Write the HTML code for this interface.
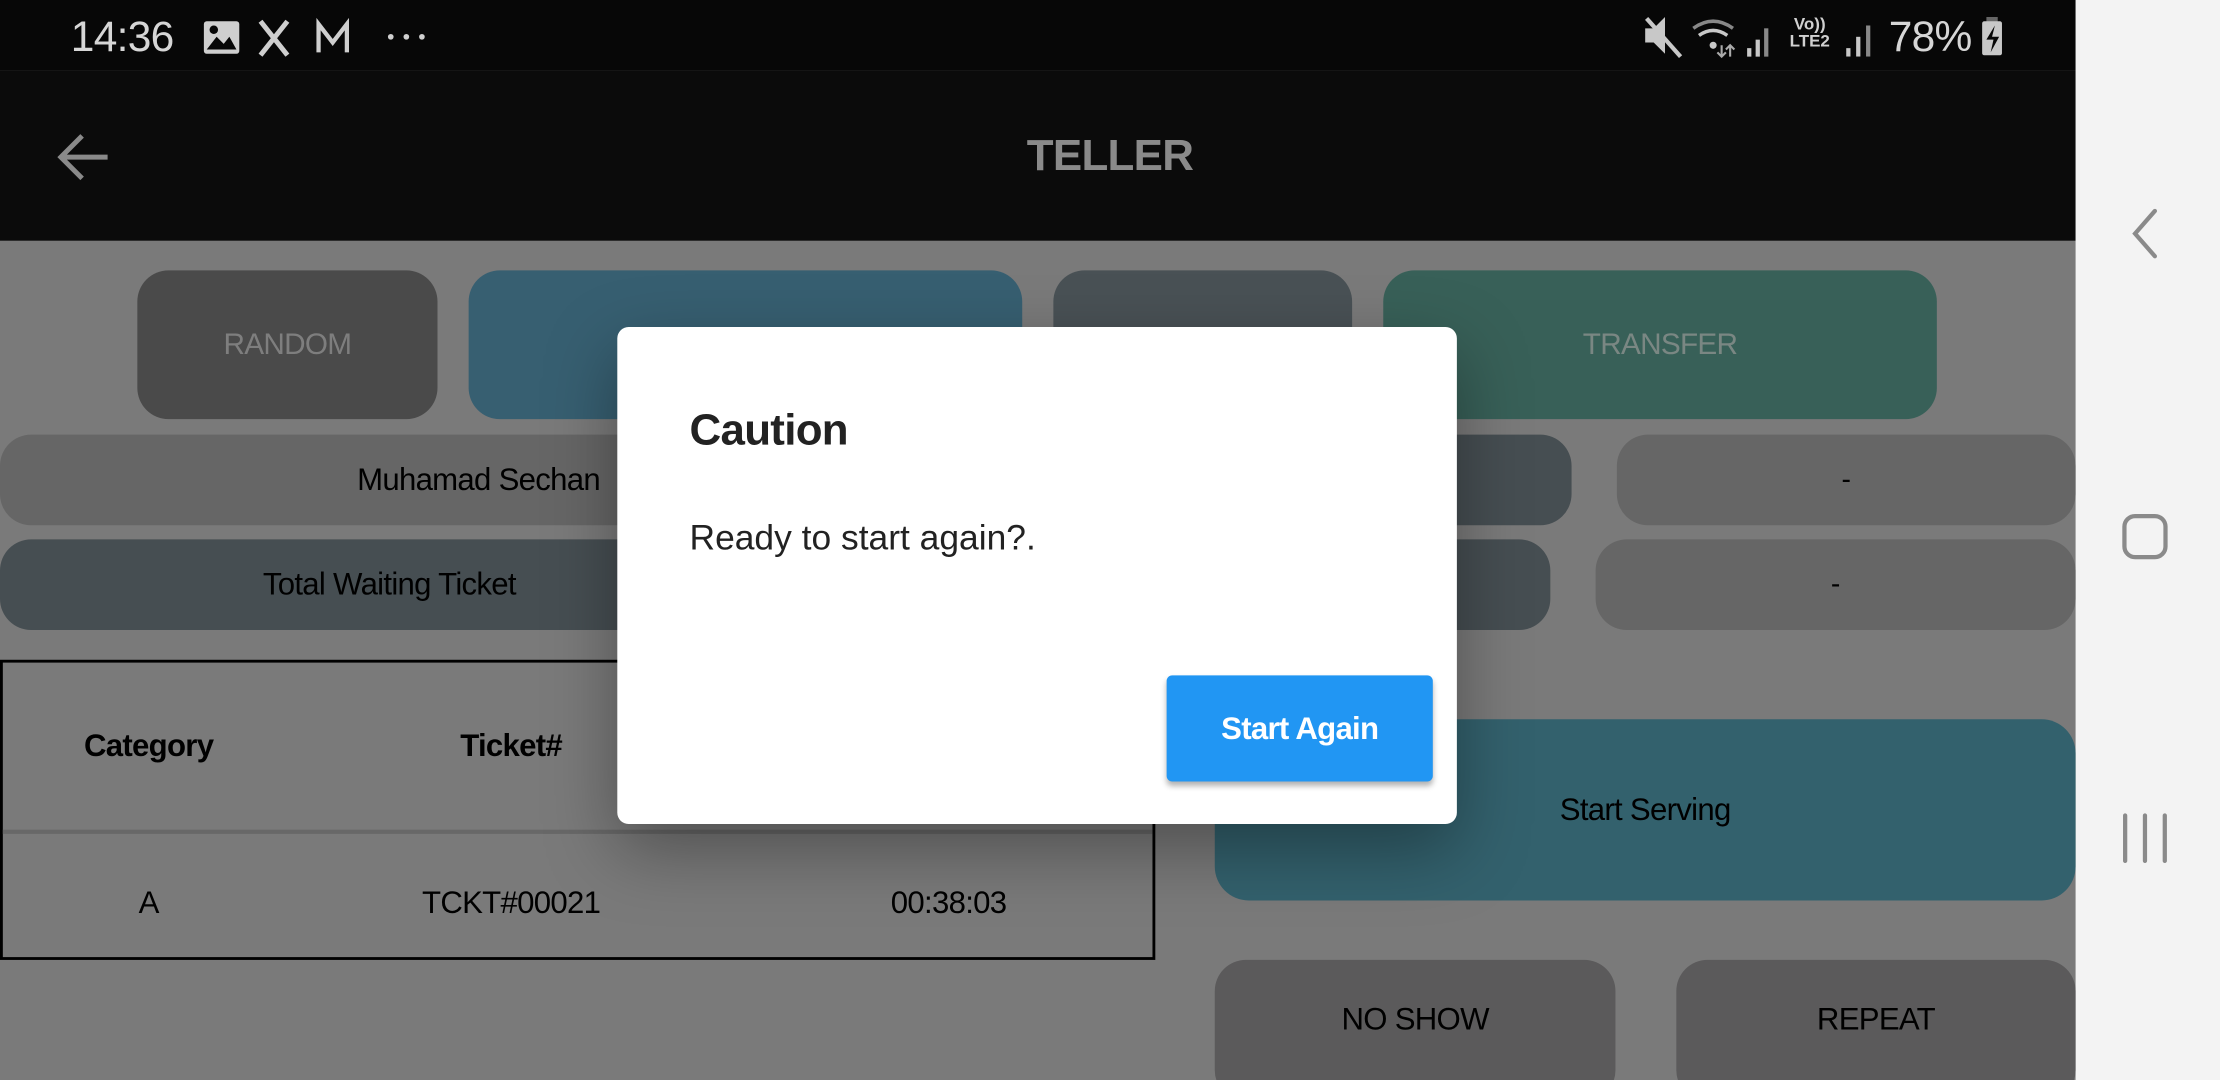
<!DOCTYPE html>
<html><head><meta charset="utf-8"><style>
html,body{margin:0;padding:0;width:2220px;height:1080px;overflow:hidden;background:#7a7a7a}
#s{position:absolute;left:0;top:0;width:1568px;height:763px;transform:scale(1.41582);transform-origin:0 0;font-family:"Liberation Sans",sans-serif;background:#7a7a7a;overflow:hidden}
.a{position:absolute;box-sizing:border-box}
.c{display:flex;align-items:center;justify-content:center}
.t{letter-spacing:-0.5px}
</style></head><body><div id="s">
<div class="a" style="left:0;top:0;width:1466px;height:50px;background:#070707"></div>
<div class="a" style="left:0;top:50px;width:1466px;height:120px;background:#0b0b0b"></div>
<div class="a" style="left:1466px;top:0;width:102px;height:763px;background:#f3f3f3"></div>
<div class="a t" style="left:50px;top:10px;font-size:30px;color:#d6d6d6">14:36</div>
<svg class="a" style="left:143px;top:12px" width="180" height="28" viewBox="0 0 180 28">
<rect x="1" y="3" width="25" height="23" rx="2" fill="#cfcfcf"/><path d="M3 23 L10 14 L15 19 L19 14 L24 23Z" fill="#070707"/><circle cx="8" cy="9" r="3" fill="#070707"/>
<path d="M41 3 L60 27 M60 3 L41 27" stroke="#cfcfcf" stroke-width="3.5"/>
<path d="M82 25 V5 L92 18 L102 5 V25" stroke="#cfcfcf" stroke-width="3" fill="none"/>
<circle cx="133" cy="14" r="2" fill="#cfcfcf"/><circle cx="144" cy="14" r="2" fill="#cfcfcf"/><circle cx="155" cy="14" r="2" fill="#cfcfcf"/>
</svg>
<svg class="a" style="left:1160px;top:10px" width="100" height="32" viewBox="0 0 100 32">
<path d="M2 10h6l8-8v26l-8-8H2z" fill="#c8c8c8"/><path d="M3 3L27 30" stroke="#c8c8c8" stroke-width="3"/>
<path d="M36 10 Q50 0 64 10" stroke="#888" stroke-width="2.5" fill="none"/><path d="M40 15 Q50 8 60 15" stroke="#c8c8c8" stroke-width="2.5" fill="none"/><circle cx="50" cy="22" r="2.5" fill="#c8c8c8"/>
<path d="M56 22v8M53 27l3 3 3-3M62 30v-8M59 25l3-3 3 3" stroke="#aaa" stroke-width="1.5" fill="none"/>
<rect x="74" y="24" width="3" height="6" fill="#c8c8c8"/><rect x="80" y="18" width="3" height="12" fill="#c8c8c8"/><rect x="86" y="10" width="3" height="20" fill="#888"/>
</svg>
<div class="a" style="left:1264px;top:11px;font-size:12px;line-height:12px;color:#d0d0d0;font-weight:bold;text-align:center">Vo))<br>LTE2</div>
<svg class="a" style="left:1302px;top:12px" width="24" height="28"><rect x="2" y="22" width="3" height="6" fill="#c8c8c8"/><rect x="9" y="14" width="3" height="14" fill="#c8c8c8"/><rect x="16" y="6" width="3" height="22" fill="#888"/></svg>
<div class="a t" style="left:1334px;top:10px;font-size:30px;color:#d6d6d6">78%</div>
<svg class="a" style="left:1398px;top:12px" width="22" height="28"><rect x="5" y="0" width="8" height="4" fill="#666"/><rect x="2" y="3" width="14" height="24" rx="1.5" fill="#c8c8c8"/><path d="M11 6L5 16h5l-2 9 6-11H9z" fill="#070707"/></svg>
<svg class="a" style="left:38px;top:90px" width="42" height="42" viewBox="0 0 42 42"><path d="M38 21H6M20 6L5 21l15 15" stroke="#8a8a8a" stroke-width="3.5" fill="none"/></svg>
<div class="a t" style="left:0;top:92px;width:1568px;text-align:center;font-size:31px;font-weight:bold;color:#8a8a8a">TELLER</div>
<div class="a c t" style="left:97px;top:191px;width:212px;height:105px;border-radius:22px;background:#4a4a4a;color:#7e7e7e;font-size:21px">RANDOM</div>
<div class="a" style="left:331px;top:191px;width:391px;height:105px;border-radius:22px;background:#375f71"></div>
<div class="a" style="left:744px;top:191px;width:211px;height:105px;border-radius:22px;background:#495155"></div>
<div class="a c t" style="left:977px;top:191px;width:391px;height:105px;border-radius:22px;background:#386058;color:#7a8783;font-size:21px">TRANSFER</div>
<div class="a c t" style="left:0;top:307px;width:676px;height:64px;border-radius:22px;background:#666;color:#000;font-size:22px">Muhamad Sechan</div>
<div class="a" style="left:700px;top:307px;width:410px;height:64px;border-radius:22px;background:#464e52"></div>
<div class="a c" style="left:1142px;top:307px;width:324px;height:64px;border-radius:22px;background:#666;color:#000;font-size:20px">-</div>
<div class="a c t" style="left:0;top:381px;width:550px;height:64px;border-radius:22px;background:#464e52;color:#000;font-size:22px">Total Waiting Ticket</div>
<div class="a" style="left:570px;top:381px;width:525px;height:64px;border-radius:22px;background:#464e52"></div>
<div class="a c" style="left:1127px;top:381px;width:339px;height:64px;border-radius:22px;background:#666;color:#000;font-size:20px">-</div>
<div class="a" style="left:0;top:466px;width:816px;height:212px;border:2px solid #000"></div>
<div class="a" style="left:2px;top:586px;width:812px;height:3px;background:#686868"></div>
<div class="a t" style="left:105px;top:514px;transform:translateX(-50%);font-size:22px;font-weight:bold;color:#000">Category</div>
<div class="a t" style="left:361px;top:514px;transform:translateX(-50%);font-size:22px;font-weight:bold;color:#000">Ticket#</div>
<div class="a t" style="left:105px;top:625px;transform:translateX(-50%);font-size:22px;color:#000">A</div>
<div class="a t" style="left:361px;top:625px;transform:translateX(-50%);font-size:22px;color:#000">TCKT#00021</div>
<div class="a t" style="left:670px;top:625px;transform:translateX(-50%);font-size:22px;color:#000">00:38:03</div>
<div class="a c t" style="left:858px;top:508px;width:608px;height:128px;border-radius:24px;background:#33616d;color:#000;font-size:22px">Start Serving</div>
<div class="a c t" style="left:858px;top:678px;width:283px;height:100px;border-radius:22px;background:#5b5a5b;color:#000;font-size:22px;align-items:flex-start;padding-top:29px">NO SHOW</div>
<div class="a c t" style="left:1184px;top:678px;width:282px;height:100px;border-radius:22px;background:#5b5a5b;color:#000;font-size:22px;align-items:flex-start;padding-top:29px">REPEAT</div>
<div class="a" style="left:436px;top:231px;width:593px;height:351px;border-radius:8px;background:#fff;box-shadow:0 18px 50px rgba(0,0,0,0.35)">
<div class="a t" style="left:51px;top:55px;font-size:31px;font-weight:bold;color:#222">Caution</div>
<div class="a" style="left:51px;top:135px;font-size:25px;color:#222">Ready to start again?.</div>
<div class="a c t" style="left:388px;top:246px;width:188px;height:75px;border-radius:4px;background:#2196f3;color:#fff;font-size:22px;font-weight:bold;box-shadow:0 3px 4px rgba(0,0,0,0.3)">Start Again</div>
</div>
<svg class="a" style="left:1500px;top:145px" width="30" height="40"><path d="M22 4L8 20l14 16" stroke="#8a8a8a" stroke-width="3" fill="none" stroke-linecap="round"/></svg>
<div class="a" style="left:1499px;top:363px;width:32px;height:32px;border:3px solid #8a8a8a;border-radius:9px"></div>
<svg class="a" style="left:1496px;top:572px" width="40" height="40"><path d="M5 4v32M19 4v32M33 4v32" stroke="#8a8a8a" stroke-width="3" stroke-linecap="round"/></svg>
</div></body></html>
